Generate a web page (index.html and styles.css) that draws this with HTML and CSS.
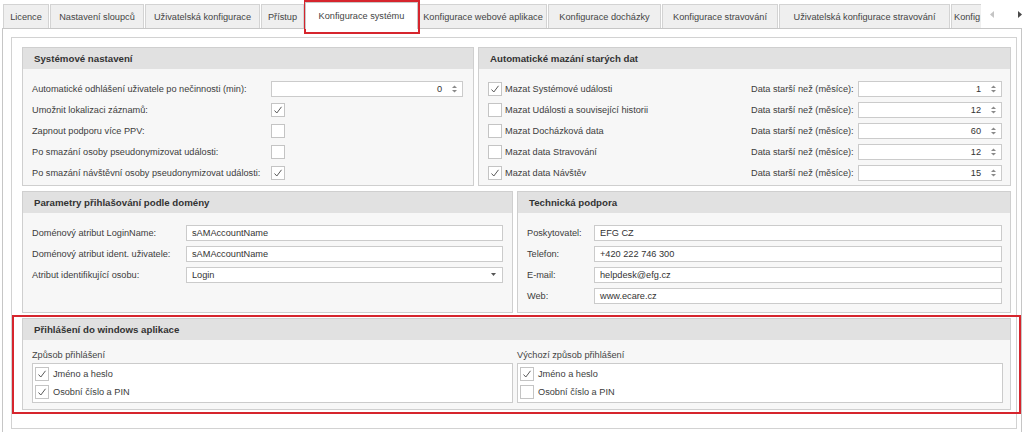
FILE: index.html
```html
<!DOCTYPE html>
<html lang="cs">
<head>
<meta charset="utf-8">
<title>Konfigurace systému</title>
<link rel="stylesheet" href="styles.css">
</head>
<body>
<div class="window">
  <div class="tabstrip">
    <div class="tab t-licence">Licence</div>
    <div class="tab t-cols">Nastavení sloupců</div>
    <div class="tab t-user">Uživatelská konfigurace</div>
    <div class="tab t-access">Přístup</div>
    <div class="tab tab-active t-sys">Konfigurace systému</div>
    <div class="tab t-web">Konfigurace webové aplikace</div>
    <div class="tab t-att">Konfigurace docházky</div>
    <div class="tab t-meal">Konfigurace stravování</div>
    <div class="tab t-usermeal">Uživatelská konfigurace stravování</div>
    <div class="tab tab-cut">Konfig</div>
    <div class="tab-scroll">
      <svg class="arrow arrow-off" width="4" height="7" viewBox="0 0 4 7"><polygon points="4,0 0,3.5 4,7"/></svg>
      <svg class="arrow" width="4" height="7" viewBox="0 0 4 7"><polygon points="0,0 4,3.5 0,7"/></svg>
    </div>
  </div>

  <div class="page">
    <div class="frame">
      <div class="row row-top">
        <section class="panel panel-sys">
          <div class="panel-head">Systémové nastavení</div>
          <div class="panel-body form-sys">
            <span class="lbl">Automatické odhlášení uživatele po nečinnosti (min):</span>
            <div class="input spin"><span class="val">0</span><svg class="spin-arrows" width="7" height="10" viewBox="0 0 7 10"><polygon points="1,4 3.5,1.5 6,4"/><polygon points="1,6 3.5,8.5 6,6"/></svg></div>
            <span class="lbl">Umožnit lokalizaci záznamů:</span>
            <span class="cb on"><svg width="12" height="12" viewBox="0 0 12 12"><polyline points="2.5,6.5 4.8,9 9.5,2.8"/></svg></span>
            <span class="lbl">Zapnout podporu více PPV:</span>
            <span class="cb"></span>
            <span class="lbl">Po smazání osoby pseudonymizovat události:</span>
            <span class="cb"></span>
            <span class="lbl">Po smazání návštěvní osoby pseudonymizovat události:</span>
            <span class="cb on"><svg width="12" height="12" viewBox="0 0 12 12"><polyline points="2.5,6.5 4.8,9 9.5,2.8"/></svg></span>
          </div>
        </section>

        <section class="panel panel-del">
          <div class="panel-head">Automatické mazání starých dat</div>
          <div class="panel-body form-del">
            <label class="chk"><span class="cb on"><svg width="12" height="12" viewBox="0 0 12 12"><polyline points="2.5,6.5 4.8,9 9.5,2.8"/></svg></span>Mazat Systémové události</label>
            <span class="lbl">Data starší než (měsíce):</span>
            <div class="input spin"><span class="val">1</span><svg class="spin-arrows" width="7" height="10" viewBox="0 0 7 10"><polygon points="1,4 3.5,1.5 6,4"/><polygon points="1,6 3.5,8.5 6,6"/></svg></div>

            <label class="chk"><span class="cb"></span>Mazat Události a související historii</label>
            <span class="lbl">Data starší než (měsíce):</span>
            <div class="input spin"><span class="val">12</span><svg class="spin-arrows" width="7" height="10" viewBox="0 0 7 10"><polygon points="1,4 3.5,1.5 6,4"/><polygon points="1,6 3.5,8.5 6,6"/></svg></div>

            <label class="chk"><span class="cb"></span>Mazat Docházková data</label>
            <span class="lbl">Data starší než (měsíce):</span>
            <div class="input spin"><span class="val">60</span><svg class="spin-arrows" width="7" height="10" viewBox="0 0 7 10"><polygon points="1,4 3.5,1.5 6,4"/><polygon points="1,6 3.5,8.5 6,6"/></svg></div>

            <label class="chk"><span class="cb"></span>Mazat data Stravování</label>
            <span class="lbl">Data starší než (měsíce):</span>
            <div class="input spin"><span class="val">12</span><svg class="spin-arrows" width="7" height="10" viewBox="0 0 7 10"><polygon points="1,4 3.5,1.5 6,4"/><polygon points="1,6 3.5,8.5 6,6"/></svg></div>

            <label class="chk"><span class="cb on"><svg width="12" height="12" viewBox="0 0 12 12"><polyline points="2.5,6.5 4.8,9 9.5,2.8"/></svg></span>Mazat data Návštěv</label>
            <span class="lbl">Data starší než (měsíce):</span>
            <div class="input spin"><span class="val">15</span><svg class="spin-arrows" width="7" height="10" viewBox="0 0 7 10"><polygon points="1,4 3.5,1.5 6,4"/><polygon points="1,6 3.5,8.5 6,6"/></svg></div>
          </div>
        </section>
      </div>

      <div class="row row-mid">
        <section class="panel panel-param">
          <div class="panel-head">Parametry přihlašování podle domény</div>
          <div class="panel-body form-param">
            <span class="lbl">Doménový atribut LoginName:</span>
            <div class="input">sAMAccountName</div>
            <span class="lbl">Doménový atribut ident. uživatele:</span>
            <div class="input">sAMAccountName</div>
            <span class="lbl">Atribut identifikující osobu:</span>
            <div class="input combo"><span>Login</span><svg width="5" height="3" viewBox="0 0 5 3"><polygon points="0,0 5,0 2.5,3"/></svg></div>
          </div>
        </section>

        <section class="panel panel-tech">
          <div class="panel-head">Technická podpora</div>
          <div class="panel-body form-tech">
            <span class="lbl">Poskytovatel:</span>
            <div class="input">EFG CZ</div>
            <span class="lbl">Telefon:</span>
            <div class="input">+420 222 746 300</div>
            <span class="lbl">E-mail:</span>
            <div class="input">helpdesk@efg.cz</div>
            <span class="lbl">Web:</span>
            <div class="input">www.ecare.cz</div>
          </div>
        </section>
      </div>

      <section class="panel panel-login">
        <div class="panel-head">Přihlášení do windows aplikace</div>
        <div class="form-login">
          <div class="col">
            <div class="caption">Způsob přihlášení</div>
            <div class="list">
              <div class="item"><span class="cb on"><svg width="12" height="12" viewBox="0 0 12 12"><polyline points="2.5,6.5 4.8,9 9.5,2.8"/></svg></span>Jméno a heslo</div>
              <div class="item"><span class="cb on"><svg width="12" height="12" viewBox="0 0 12 12"><polyline points="2.5,6.5 4.8,9 9.5,2.8"/></svg></span>Osobní číslo a PIN</div>
            </div>
          </div>
          <div class="col">
            <div class="caption">Výchozí způsob přihlášení</div>
            <div class="list">
              <div class="item"><span class="cb on"><svg width="12" height="12" viewBox="0 0 12 12"><polyline points="2.5,6.5 4.8,9 9.5,2.8"/></svg></span>Jméno a heslo</div>
              <div class="item"><span class="cb"></span>Osobní číslo a PIN</div>
            </div>
          </div>
        </div>
      </section>
    </div>
  </div>

  <div class="mark mark-tab"></div>
  <div class="mark mark-login"></div>
</div>
</body>
</html>
```

FILE: styles.css
```css
* { box-sizing: border-box; margin: 0; padding: 0; }

html, body {
  width: 1024px;
  height: 432px;
  overflow: hidden;
  background: #ffffff;
}

body {
  font-family: "Liberation Sans", Arial, sans-serif;
  font-size: 9.2px;
  color: #3c3c3c;
}

.window {
  position: relative;
  width: 1024px;
  height: 432px;
  overflow: hidden;
}

/* ---------- tab strip ---------- */
.tabstrip {
  display: flex;
  align-items: flex-end;
  height: 28px;
  padding-left: 3px;
}

.tab {
  flex: none;
  height: 24px;
  margin-right: 1px;
  display: flex;
  align-items: center;
  justify-content: center;
  background: #efefef;
  border: 1px solid #d3d3d3;
  border-bottom: none;
  color: #444;
  white-space: nowrap;
}

.t-licence { width: 46px; }
.t-cols { width: 94px; }
.t-user { width: 115px; }
.t-access { width: 43px; }
.t-sys { width: 113px; }
.t-web { width: 128px; }
.t-att { width: 113px; }
.t-meal { width: 116px; }
.t-usermeal { width: 171px; }

.tab-active {
  height: 27px;
  margin-bottom: -1px;
  background: #ffffff;
  border-color: #c8c8c8;
  z-index: 1;
}

.tab-cut {
  width: 30px;
  justify-content: flex-start;
  padding-left: 2px;
  overflow: hidden;
  border-right: none;
}

.tab-scroll {
  flex: 1;
  align-self: stretch;
  display: flex;
  align-items: center;
  padding-left: 8px;
  gap: 24px;
}

.arrow { fill: #4a4a4a; }
.arrow-off { fill: #c4c4c4; }

/* ---------- page ---------- */
.page {
  margin: 0 2px;
  height: 410px;
  border: 1px solid #c6c6c6;
  padding: 8px 4px 8px 8px;
}

.frame {
  height: 392px;
  border: 1px solid #d2d2d2;
  background: #ffffff;
  padding: 9px 5px 0 10px;
  display: flex;
  flex-direction: column;
  gap: 5px;
}

.row {
  display: flex;
  gap: 4px;
  flex: none;
}

.row-top { height: 139px; }
.row-mid { height: 122px; }

/* ---------- panels ---------- */
.panel {
  border: 1px solid #cfcfcf;
  background: #f7f7f7;
  display: flex;
  flex-direction: column;
}

.panel-head {
  flex: none;
  height: 21px;
  line-height: 21px;
  padding-left: 11px;
  background: #e1e1e1;
  font-weight: bold;
  font-size: 9.7px;
  color: #333;
}

.panel-sys { width: 452px; flex: none; }
.panel-del { flex: 1; }
.panel-param { width: 491px; flex: none; }
.panel-tech { flex: 1; }
.panel-login { height: 92px; flex: none; }

.panel-body {
  display: grid;
  grid-auto-rows: 21px;
  align-items: center;
  align-content: start;
}

.form-sys {
  padding: 9px 10px 0 9px;
  grid-template-columns: 239px 1fr;
}

.form-del {
  padding: 9px 8px 0 9px;
  grid-template-columns: 1fr 107px 144px;
}

.form-param {
  padding: 9px 9px 0 9px;
  grid-template-columns: 154px 1fr;
}

.form-tech {
  padding: 9px 8px 0 9px;
  grid-template-columns: 67px 1fr;
}

.lbl {
  white-space: nowrap;
  color: #3c3c3c;
}

/* ---------- inputs ---------- */
.input {
  height: 16px;
  line-height: 14px;
  border: 1px solid #cbcbcb;
  background: #ffffff;
  padding: 0 5px;
  color: #333;
  white-space: nowrap;
}

.spin {
  display: flex;
  align-items: center;
  justify-content: flex-end;
  padding-right: 4px;
}

.spin .val { margin-right: 9px; }

.spin-arrows { fill: #8a8a8a; }

.combo {
  display: flex;
  align-items: center;
  justify-content: space-between;
  padding-right: 6px;
}

.combo svg { fill: #555; }

/* ---------- checkboxes ---------- */
.cb {
  flex: none;
  width: 14px;
  height: 14px;
  border: 1px solid #c4c4c4;
  background: #ffffff;
  display: inline-flex;
  align-items: center;
  justify-content: center;
}

.cb svg polyline {
  fill: none;
  stroke: #5a5a5a;
  stroke-width: 1;
}

.chk {
  display: flex;
  align-items: center;
  gap: 3px;
  white-space: nowrap;
}

/* ---------- login panel ---------- */
.form-login {
  display: grid;
  grid-template-columns: 481px 1fr;
  column-gap: 4px;
  align-items: start;
  padding: 8px 7px 0 9px;
}

.caption {
  height: 14px;
  line-height: 14px;
  margin-bottom: 1px;
  color: #444;
}

.list {
  border: 1px solid #cbcbcb;
  background: #ffffff;
  padding: 1px 2px;
}

.item {
  height: 18px;
  display: flex;
  align-items: center;
  gap: 4px;
  color: #3c3c3c;
}

/* ---------- annotation boxes ---------- */
.mark {
  position: absolute;
  border: 2px solid #d6252d;
  pointer-events: none;
}

.mark-tab {
  left: 304px;
  top: 0;
  width: 116px;
  height: 34px;
}

.mark-login {
  left: 12px;
  top: 315px;
  width: 1009px;
  height: 99px;
}
```
